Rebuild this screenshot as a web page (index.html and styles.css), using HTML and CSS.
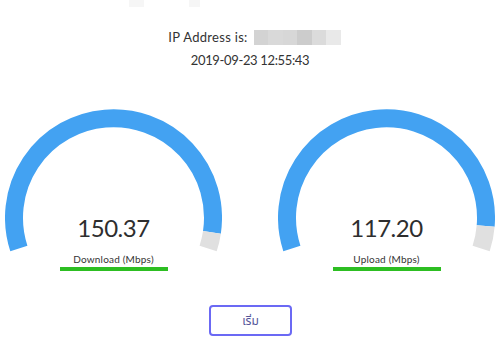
FILE: index.html
```html
<!DOCTYPE html>
<html lang="th">
<head>
<meta charset="utf-8">
<link rel="stylesheet" href="styles.css">
</head>
<body>
<div class="page">
  <div class="ghosts">
    <span class="ghost ghost-a"></span>
    <span class="ghost ghost-b"></span>
  </div>
  <div class="info">
    <div class="ip-line">IP Address is: <span class="masked"><i class="m1"></i><i class="m2"></i><i class="m3"></i><i class="m4"></i><i class="m5"></i><i class="m6"></i></span></div>
    <div class="date">2019-09-23 12:55:43</div>
  </div>
  <div class="gauges">
    <div class="gauge">
      <svg class="dial" width="217" height="145" viewBox="0 0 217 145">
        <path class="arc-fill" d="M 13.87 139.55 A 99.5 99.5 0 1 1 206.93 123.34"/>
        <path class="arc-rest" d="M 206.93 123.34 A 99.5 99.5 0 0 1 203.13 139.55"/>
      </svg>
      <div class="readout">
        <div class="value">150.37</div>
        <div class="label">Download (Mbps)</div>
        <div class="bar"></div>
      </div>
    </div>
    <div class="gauge">
      <svg class="dial" width="217" height="145" viewBox="0 0 217 145">
        <path class="arc-fill" d="M 13.87 139.55 A 99.5 99.5 0 1 1 207.67 116.95"/>
        <path class="arc-rest" d="M 207.67 116.95 A 99.5 99.5 0 0 1 203.13 139.55"/>
      </svg>
      <div class="readout">
        <div class="value">117.20</div>
        <div class="label">Upload (Mbps)</div>
        <div class="bar"></div>
      </div>
    </div>
  </div>
  <div class="actions">
    <button class="start">เริ่ม</button>
  </div>
</div>
</body>
</html>
```

FILE: styles.css
```css
html, body {
  margin: 0;
  padding: 0;
  background: #ffffff;
}
body {
  width: 500px;
  height: 345px;
  overflow: hidden;
  font-family: Lato, "Noto Sans", "DejaVu Sans", sans-serif;
  color: #333333;
}
.page {
  display: flex;
  flex-direction: column;
}
.ghosts {
  height: 7px;
  position: relative;
}
.ghost {
  position: absolute;
  top: 0;
  height: 7px;
  background: #f6f6f6;
}
.ghost-a { left: 129px; width: 15px; }
.ghost-b { left: 189px; width: 11px; }

.info {
  margin-top: 22px;
  display: flex;
  flex-direction: column;
  align-items: center;
  gap: 7px;
}
.ip-line {
  display: flex;
  align-items: center;
  gap: 6px;
  font-size: 13px;
  line-height: 16px;
  margin-left: 9px;
  letter-spacing: 0.3px;
}
.masked {
  display: flex;
  height: 15px;
}
.masked i {
  display: block;
  width: 14.5px;
  height: 15px;
}
.m1 { background: #d3d3d3; }
.m2 { background: #d9d9d9; }
.m3 { background: #d7d7d7; }
.m4 { background: #cccccc; }
.m5 { background: #dbdbdb; }
.m6 { background: #e9e9e9; }
.date {
  font-size: 13px;
  line-height: 16px;
  letter-spacing: -0.35px;
}

.gauges {
  margin-top: 41px;
  padding: 0 5px;
  display: flex;
  justify-content: space-between;
}
.gauge {
  width: 217px;
  display: flex;
  flex-direction: column;
  align-items: center;
}
.dial {
  display: block;
}
.arc-fill {
  fill: none;
  stroke: #43a2f2;
  stroke-width: 18;
}
.arc-rest {
  fill: none;
  stroke: #e0e0e0;
  stroke-width: 18;
}
.readout {
  margin-top: -40px;
  display: flex;
  flex-direction: column;
  align-items: center;
}
.value {
  font-size: 24px;
  line-height: 28px;
  color: #2e2e2e;
  letter-spacing: -0.5px;
}
.label {
  margin-top: 10px;
  font-size: 10px;
  line-height: 14px;
  color: #333333;
  letter-spacing: 0.2px;
}
.bar {
  margin-top: 1px;
  width: 108px;
  height: 4px;
  background: #2dbe22;
}

.actions {
  margin-top: 34px;
  display: flex;
  justify-content: center;
}
.start {
  width: 83px;
  height: 31px;
  margin-left: 1px;
  border: 2px solid #6b69f4;
  border-radius: 4px;
  background: #ffffff;
  color: #55559a;
  font-family: "Noto Sans Thai", "Noto Sans", "DejaVu Sans", sans-serif;
  font-size: 12px;
  padding: 0;
}
```
